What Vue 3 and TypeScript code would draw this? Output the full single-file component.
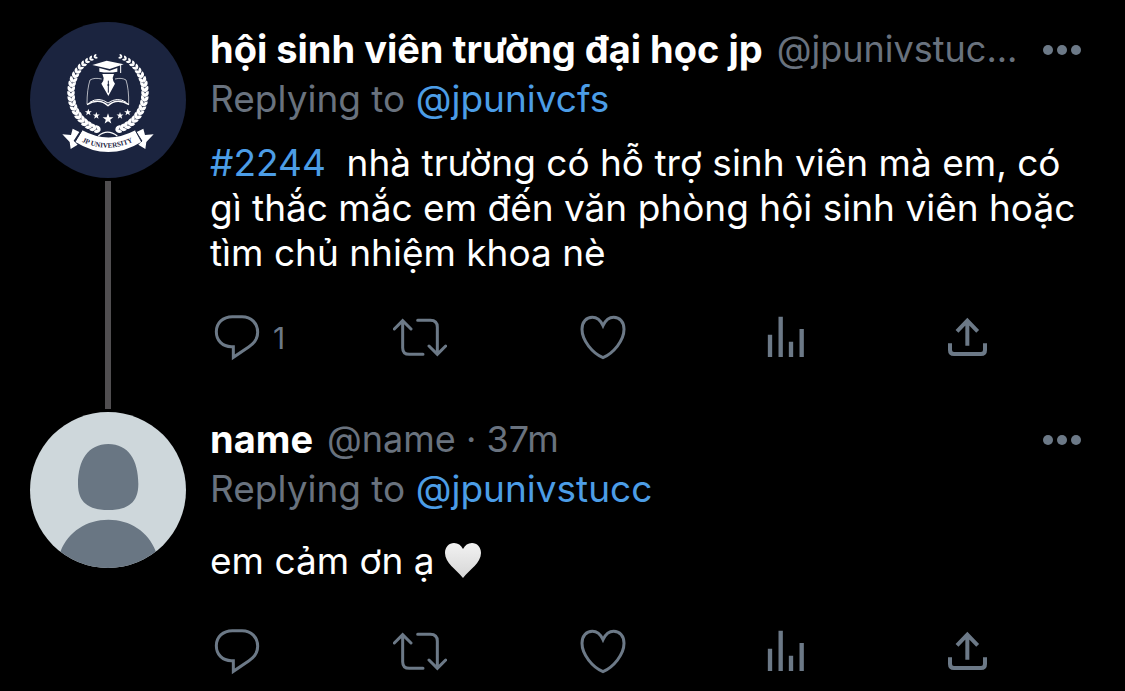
<script setup lang="ts">
interface Tweet {
  id: number
  name: string
  handle: string
  time?: string
  replyTo: string
  tag?: string
  text: string
  heart?: boolean
  replies?: number
  avatar: 'university' | 'default'
}

const tweets: Tweet[] = [
  {
    id: 1,
    name: 'hội sinh viên trường đại học jp',
    handle: '@jpunivstuc...',
    replyTo: '@jpunivcfs',
    tag: '#2244',
    text: 'nhà trường có hỗ trợ sinh viên mà em, có gì thắc mắc em đến văn phòng hội sinh viên hoặc tìm chủ nhiệm khoa nè',
    replies: 1,
    avatar: 'university',
  },
  {
    id: 2,
    name: 'name',
    handle: '@name',
    time: '37m',
    replyTo: '@jpunivstucc',
    text: 'em cảm ơn ạ',
    heart: true,
    avatar: 'default',
  },
]

// Leaves of the laurel wreath, placed in pairs along both halves of a ring.
const leaves: string[] = []
const count = 21
for (const side of [1, -1]) {
  for (let i = 0; i < count; i++) {
    const deg = 20 + (i * 144) / (count - 1)
    const rad = (deg * Math.PI) / 180
    const size = 0.6 + 0.4 * Math.min(1, i / 7)
    for (const edge of [1, -1]) {
      const dist = edge * 5 * size
      const x = 159 + side * Math.sin(rad) * (111 + dist)
      const y = 143 - Math.cos(rad) * (115 + dist)
      const turn = side * (deg - 90 + edge * 30)
      leaves.push(`translate(${x.toFixed(1)} ${y.toFixed(1)}) rotate(${turn.toFixed(1)}) scale(${size.toFixed(2)})`)
    }
  }
}

const stars = [
  { x: 100, y: 202, s: 11 },
  { x: 124, y: 212, s: 11 },
  { x: 159, y: 222, s: 17 },
  { x: 195, y: 212, s: 11 },
  { x: 218, y: 202, s: 11 },
]
</script>

<template>
  <main class="thread">
    <article v-for="(tweet, index) in tweets" :key="tweet.id" class="tweet">
      <div class="rail">
        <a href="#" class="avatar" :aria-label="tweet.name">
          <svg v-if="tweet.avatar === 'university'" viewBox="-75 -69 468 468">
            <rect x="-75" y="-69" width="468" height="468" fill="#1b243f" />
            <g fill="#fff">
              <path v-for="(leaf, i) in leaves" :key="i" :transform="leaf" d="M0-11C7-4 7 4 0 10C-7 4-7-4 0-11Z" />
              <path d="M112 60L155 47L206 58L164 72Z" />
              <path d="M133 69L164 77L187 69V80Q160 85 133 80Z" />
              <path d="M142 87H177L173 99Q173 107 180 116L160 153L139 116Q147 107 146 99Z" />
              <path v-for="(star, i) in stars" :key="i" :transform="`translate(${star.x} ${star.y}) scale(${star.s})`" d="M0-1L.25-.32L.95-.31L.39.12L.59.81L0 .4L-.59.81L-.39.12L-.95-.31L-.25-.32Z" />
              <path d="M82 256Q160 299 241 256L260 290Q160 352 60 290Z" />
              <path d="M22 268L48 270L53 251L73 261L56 287L68 299L47 312L44 291Z" />
              <path d="M296 268L270 270L265 251L245 261L262 287L250 299L271 312L274 291Z" />
            </g>
            <path d="M160 107V143" stroke="#1b243f" stroke-width="3" />
            <circle cx="160" cy="120" r="3" fill="#1b243f" />
            <g fill="none" stroke="#fff" stroke-width="3">
              <path d="M197 60V84" />
              <path d="M140 102Q118 97 105 105Q96 133 96 177M180 102Q200 97 213 105Q222 133 221 177" stroke-width="2" />
              <path d="M96 179Q132 157 159 182Q185 157 222 179" stroke-width="4" />
              <path d="M104 172Q132 154 159 174Q187 154 214 172" />
              <path d="M130 273Q157 250 187 273" stroke-width="4" />
            </g>
            <path d="M81 256L60 291M241 256L260 291" stroke="#1b243f" stroke-width="3" />
            <path id="ribbon-line" d="M80 290Q160 328 242 286" fill="none" />
            <text class="ribbon"><textPath href="#ribbon-line">JP UNIVERSITY</textPath></text>
          </svg>
          <svg v-else viewBox="30 36 468 468">
            <rect x="30" y="36" width="468" height="468" fill="#ced7db" />
            <path d="M265 132C325 132 355 180 355 252C355 307 325 330 265 330C205 330 174 307 174 252C174 180 205 132 265 132ZM122 453C145 395 200 359 265 359C330 359 385 395 407 453V504H122Z" fill="#697683" />
          </svg>
        </a>
        <span v-if="index < tweets.length - 1" class="connector"></span>
      </div>

      <div class="content">
        <header class="head">
          <a href="#" class="name">{{ tweet.name }}</a>
          <span class="meta">{{ tweet.handle }}<template v-if="tweet.time"> · {{ tweet.time }}</template></span>
          <button type="button" class="more" aria-label="More">
            <svg viewBox="0 0 38 10"><circle cx="5" cy="5" r="5" /><circle cx="19" cy="5" r="5" /><circle cx="33" cy="5" r="5" /></svg>
          </button>
        </header>
        <p class="replying">Replying to <a href="#">{{ tweet.replyTo }}</a></p>
        <p class="body">
          <template v-if="tweet.tag"><a href="#">{{ tweet.tag }}</a>&nbsp; </template>{{ tweet.text }}
          <svg v-if="tweet.heart" class="heart" viewBox="0 0 36 35" role="img" aria-label="white heart">
            <defs>
              <linearGradient id="heart-fill" x1="0" y1="0" x2="0" y2="1">
                <stop offset="0" stop-color="#f2f2f2" />
                <stop offset="1" stop-color="#d6d6d6" />
              </linearGradient>
            </defs>
            <path d="M18 6C16 2 13 0 9 0C4 0 0 4 0 10C0 20 11 26 18 35C25 26 36 20 36 10C36 4 32 0 27 0C23 0 20 2 18 6Z" fill="url(#heart-fill)" />
          </svg>
        </p>
        <footer class="actions">
          <button type="button" aria-label="Reply">
            <svg viewBox="30 30 162 162"><path d="M97 47H126C154 47 173 67 173 94C173 114 163 127 146 138L100 169V137H94C67 137 49 118 49 92C49 66 69 47 97 47Z" /></svg>
            <span v-if="tweet.replies">{{ tweet.replies }}</span>
          </button>
          <button type="button" aria-label="Retweet">
            <svg viewBox="579 30 162 162"><path d="M583 84L608 59L633 84M608 60V140Q608 160 628 160H669M653 58H691Q712 58 712 79V159M687 135L712 160L737 135" stroke-linecap="round" /></svg>
          </button>
          <button type="button" aria-label="Like">
            <svg viewBox="48 30 162 162"><path d="M129 74C121 57 110 49 97 49C79 49 66 63 66 85C66 119 98 157 129 170C160 157 192 119 192 85C192 63 179 49 161 49C148 49 137 57 129 74Z" /></svg>
          </button>
          <button type="button" aria-label="View analytics">
            <svg viewBox="597 30 162 162"><path d="M630 101V168M662 47V168M693 122V168M725 84V168" class="bars" /></svg>
          </button>
          <button type="button" aria-label="Share">
            <svg viewBox="1146 30 162 162"><path d="M1222 58V134M1191 91L1222 59L1253 91M1170 127V147Q1170 159 1182 159H1263Q1275 159 1275 147V127" class="tray" /></svg>
          </button>
        </footer>
      </div>
    </article>
  </main>
</template>

<style>
body {
  margin: 0;
  background: #000;
}
</style>

<style scoped>
.thread {
  padding: 22px 0 0 30px;
  color: #fff;
  font-family: Inter, "Noto Sans", sans-serif;
  font-size: 37px;
}
.tweet {
  display: flex;
  gap: 24px;
}
.rail {
  flex: none;
  width: 156px;
  display: flex;
  flex-direction: column;
  align-items: center;
}
.avatar {
  display: block;
  width: 156px;
  height: 156px;
  border-radius: 50%;
  overflow: hidden;
}
.avatar svg {
  display: block;
  width: 100%;
}
.ribbon {
  font: bold 21px "Liberation Serif", serif;
  fill: #1b243f;
}
.connector {
  flex: 1;
  width: 6px;
  margin: 3px 0;
  background: #504e50;
}
.content {
  flex: 1;
  min-width: 0;
  padding: 3px 0 47px;
}
.tweet:last-child .content {
  padding-bottom: 0;
}
.head {
  display: flex;
  align-items: center;
  gap: 14px;
  padding-right: 44px;
  line-height: 49px;
  white-space: nowrap;
}
.name {
  color: #fff;
  font-size: 38px;
  font-weight: 700;
}
a {
  color: #4c9de6;
  text-decoration: none;
}
.meta,
.replying {
  color: #69727e;
}
.meta {
  font-size: 36px;
}
button {
  padding: 0;
  border: 0;
  background: none;
  color: #6c7987;
  font: inherit;
}
.more {
  margin-left: auto;
  display: flex;
}
.more svg {
  width: 38px;
  height: 10px;
  fill: currentColor;
}
p {
  margin: 0;
}
.replying {
  line-height: 50px;
}
.body {
  margin: 16px 44px 0 0;
  line-height: 45px;
}
.heart {
  width: 36px;
  height: 35px;
  margin: 13px 0 11px;
  vertical-align: -15px;
}
.actions {
  display: grid;
  grid-template-columns: repeat(5, 1fr);
  margin-top: 36px;
}
.actions button {
  display: flex;
  align-items: center;
  gap: 9px;
  font-size: 30px;
  line-height: 36px;
}
.actions svg {
  width: 54px;
  height: 54px;
  fill: none;
  stroke: currentColor;
  stroke-width: 9px;
}
.actions .bars {
  stroke-width: 13px;
}
.actions .tray {
  stroke-width: 12px;
}
</style>
